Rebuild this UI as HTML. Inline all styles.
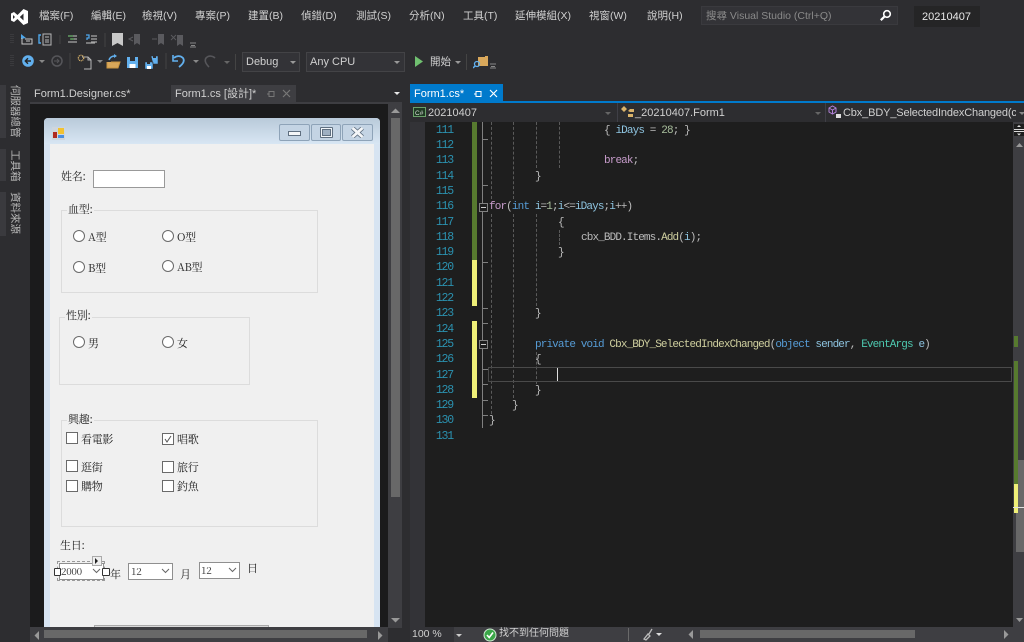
<!DOCTYPE html>
<html><head><meta charset="utf-8">
<style>
html,body{margin:0;padding:0;background:#2d2d30;}
#p{position:relative;width:1024px;height:642px;overflow:hidden;background:#2d2d30;font-family:"Liberation Sans","Noto Sans CJK TC",sans-serif;color:#d0d0d0;font-size:11px;filter:blur(.35px);}
.a,.t,.f,.c,.n{position:absolute;white-space:nowrap;}
.t{line-height:14px;}
.m{font-size:10.5px;color:#d0d0d0;top:9px;}
.f{font-family:"Noto Serif CJK SC","Liberation Serif",serif;font-size:11px;letter-spacing:-.3px;line-height:14px;color:#222;}
.c{font-family:"Liberation Mono","Noto Serif CJK SC",monospace;font-size:11px;letter-spacing:-.88px;line-height:14px;color:#bcbcbc;}
.n{font-family:"Liberation Mono",monospace;font-size:11.5px;letter-spacing:-1.18px;line-height:14px;color:#2b91af;width:28px;left:425px;text-align:right;}
.k{color:#569cd6}.p{color:#c79ccb}.y{color:#cfcf9f}.v{color:#8ec4e0}.g{color:#4ec9b0}.h{color:#a9bf9d}
.r{position:absolute;width:10px;height:10px;border:1px solid #6a6a6a;border-radius:50%;background:#fff;}
.b{position:absolute;width:10px;height:10px;border:1px solid #6a6a6a;background:#fff;}
.gb{position:absolute;border:1px solid #dcdcdc;}
.lb{background:#f0f0f0;}
.cb{position:absolute;border:1px solid #8f8f8f;background:#fff;box-sizing:border-box;}
.gd{position:absolute;width:0;border-left:1px dashed #5a5a5a;}
.vt{position:absolute;writing-mode:vertical-rl;text-orientation:sideways;font-size:10.5px;color:#b8b8b8;line-height:12px;left:9px;}
.dd{position:absolute;width:0;height:0;border-left:3px solid transparent;border-right:3px solid transparent;border-top:3px solid #999;}
</style></head><body><div id="p">

<!-- title/menu -->
<svg class="a" style="left:10px;top:8px" width="19" height="18" viewBox="0 0 19 18"><path d="M13.500 1 18 3v12l-4.500 2-6-6-3.500 3-3-1.500V5.500L4 4l3.500 3zM13.500 5.500 9.800 9l3.700 3.500zM3 7v4l2-2z" fill="#fff" fill-rule="evenodd"/></svg>
<div class="t m" style="left:39px">檔案(F)</div>
<div class="t m" style="left:91px">編輯(E)</div>
<div class="t m" style="left:142px">檢視(V)</div>
<div class="t m" style="left:195px">專案(P)</div>
<div class="t m" style="left:248px">建置(B)</div>
<div class="t m" style="left:301px">偵錯(D)</div>
<div class="t m" style="left:356px">測試(S)</div>
<div class="t m" style="left:409px">分析(N)</div>
<div class="t m" style="left:463px">工具(T)</div>
<div class="t m" style="left:515px">延伸模組(X)</div>
<div class="t m" style="left:589px">視窗(W)</div>
<div class="t m" style="left:647px">說明(H)</div>
<div class="a" style="left:701px;top:6px;width:197px;height:19px;background:#333337;border:1px solid #3a3a3e;box-sizing:border-box"></div>
<div class="t" style="left:706px;top:9px;font-size:10.5px;color:#8a8a8a">搜尋 Visual Studio (Ctrl+Q)</div>
<svg class="a" style="left:879px;top:9px" width="13" height="13" viewBox="0 0 13 13"><circle cx="8" cy="5" r="3.300" fill="none" stroke="#fff" stroke-width="1.600"/><path d="M5.500 7.500 1.800 11.200" stroke="#fff" stroke-width="2.200"/></svg>
<div class="a" style="left:914px;top:6px;width:66px;height:21px;background:#252526"></div>
<div class="t" style="left:922px;top:10px;font-size:11px;color:#e8e8e8">20210407</div>

<!-- toolbars -->
<svg class="a" style="left:0;top:29px" width="230" height="44" viewBox="0 0 230 44" fill="none">
<path d="M11 5v10M13 5v10M11 26v12M13 26v12" stroke="#46464a" stroke-dasharray="1 1"/>
<path d="M21 5l5 4-5 1z" fill="#4ea6ea"/><path d="M22 9v6h10v-5h-7" stroke="#c8c8c8"/><path d="M26 12h4" stroke="#c8c8c8"/>
<path d="M41 6h-2v8h2" stroke="#4ea6ea" stroke-width="1.400"/><path d="M43 5h8v11h-8zM45 8h4M45 11h4M45 13h4" stroke="#b8b8b8"/>
<path d="M60 6v9" stroke="#444"/>
<path d="M68 7h9M71 10h6M68 13h9" stroke="#a8a8a8" stroke-width="1.300"/><path d="M68 7h5M70 10h4" stroke="#5ba35b" stroke-width="1.300"/>
<path d="M86 6h3v3h-2v2" stroke="#4ea6ea" stroke-width="1.300"/><path d="M91 7h6M91 10h6M91 13h6M86 14h9" stroke="#a8a8a8" stroke-width="1.300"/>
<path d="M105 4v14" stroke="#444"/>
<path d="M112 4h11v13l-5.500-3-5.500 3z" fill="#c8c8c8"/>
<path d="M134 5h6v11l-3-2-3 2z" fill="#5a5a5e"/><path d="M133 8l-4 2 4 2" stroke="#5a5a5e"/>
<path d="M158 5h6v11l-3-2-3 2z" fill="#5a5a5e"/><path d="M152 10h5" stroke="#5a5a5e"/>
<path d="M177 6h6v11l-3-2-3 2z" fill="#5a5a5e"/><path d="M171 6l5 5M176 6l-5 5" stroke="#5a5a5e"/>
<path d="M190 14h6M190 18h6M191 16.500h4" stroke="#888"/>
<circle cx="28" cy="32" r="5.800" fill="#62b0ee"/><path d="M31 32h-5.500M28 29.300 25.300 32l2.700 2.700" stroke="#252526" stroke-width="1.400"/>
<path d="M39 31h6l-3 3z" fill="#888"/>
<circle cx="57" cy="32" r="5" stroke="#56565a" stroke-width="1.500"/><path d="M54 32h5M57 30l2 2-2 2" stroke="#56565a"/>
<path d="M70 24v16" stroke="#444"/>
<path d="M82 28h6l3 3v9h-7" stroke="#b8b8b8"/><circle cx="81" cy="29" r="2.700" stroke="#d9b36a" stroke-width="1.300" stroke-dasharray="1 .7"/><path d="M88 28v3h3" stroke="#b8b8b8"/>
<path d="M97 31h6l-3 3z" fill="#888"/>
<path d="M107 33v6h11l2-6h-9" fill="#d9a85b" stroke="#c9953f" stroke-width="1"/><path d="M109 31c1-3 3-4 6-4" stroke="#62b0ee" stroke-width="1.400"/><path d="M114 25l3 2-3 2z" fill="#62b0ee"/>
<path d="M127 28h11v11h-11z" fill="#62b0ee"/><path d="M130 28h5v4h-5z" fill="#2d2d30"/><path d="M129.500 35h6v4h-6z" fill="#fff"/>
<path d="M145 33h8v7h-8zM151 27h7v8h-5z" fill="#62b0ee" stroke="#2d2d30" stroke-width=".5"/><path d="M147 33h3v2h-3zM153 27h3v2h-3z" fill="#2d2d30"/><path d="M147 37h4v3h-4z" fill="#fff"/>
<path d="M166 24v16" stroke="#444"/>
<path d="M174 29c2-2 6-3 9 0 2 3 0 6-4 9" stroke="#62b0ee" stroke-width="1.800"/><path d="M173 26v6h5" stroke="#62b0ee" stroke-width="1.600"/>
<path d="M193 31h6l-3 3z" fill="#888"/>
<path d="M215 29c-2-2-6-3-9 0-2 3 0 6 3 9" stroke="#56565a" stroke-width="1.600"/>
</svg>
<div class="dd" style="left:224px;top:61px;border-top-color:#666"></div>
<div class="a" style="left:235px;top:54px;width:1px;height:16px;background:#444"></div>
<div class="a" style="left:242px;top:52px;width:58px;height:20px;border:1px solid #434346;background:#333337;box-sizing:border-box"></div>
<div class="t" style="left:246px;top:55px;font-size:11px;color:#d0d0d0">Debug</div>
<div class="dd" style="left:290px;top:61px"></div>
<div class="a" style="left:306px;top:52px;width:99px;height:20px;border:1px solid #434346;background:#333337;box-sizing:border-box"></div>
<div class="t" style="left:310px;top:55px;font-size:11px;color:#d0d0d0">Any CPU</div>
<div class="dd" style="left:394px;top:61px"></div>
<svg class="a" style="left:414px;top:55px" width="10" height="13"><path d="M1 1l8 5.500-8 5.500z" fill="#70c070"/></svg>
<div class="t" style="left:430px;top:55px;font-size:10.5px;color:#d0d0d0">開始</div>
<div class="dd" style="left:455px;top:61px"></div>
<div class="a" style="left:466px;top:54px;width:1px;height:16px;background:#444"></div>
<svg class="a" style="left:473px;top:54px" width="24" height="18" fill="none"><path d="M5 3h7v-1h3v10h-10z" fill="#d9a85b"/><circle cx="4" cy="10" r="2.500" stroke="#62b0ee" stroke-width="1.300"/><path d="M2 12 0 14" stroke="#62b0ee" stroke-width="1.500"/><path d="M17 10h6M17 14h6M18 12.500h4" stroke="#888"/></svg>

<!-- left vertical tabs -->
<div class="a" style="left:0;top:85px;width:6px;height:53px;background:#3a3a3e"></div>
<div class="a" style="left:0;top:149px;width:6px;height:32px;background:#3a3a3e"></div>
<div class="a" style="left:0;top:192px;width:6px;height:44px;background:#3a3a3e"></div>
<div class="vt" style="top:85px">伺服器總管</div>
<div class="vt" style="top:150px">工具箱</div>
<div class="vt" style="top:192px">資料來源</div>

<!-- left doc tabs -->
<div class="t" style="left:34px;top:87px;font-size:11px;color:#d0d0d0">Form1.Designer.cs*</div>
<div class="a" style="left:171px;top:85px;width:125px;height:17px;background:#3e3e42"></div>
<div class="t" style="left:175px;top:87px;font-size:11px;color:#d0d0d0">Form1.cs [設計]*</div>
<svg class="a" style="left:266px;top:88px" width="26" height="12" fill="none"><path d="M1 6h2M3 3.500h5v5h-5zM3 3v6" stroke="#777"/><path d="M17 2l7 7M24 2l-7 7" stroke="#777" stroke-width="1.200"/></svg>
<div class="dd" style="left:394px;top:92px;border-top-color:#e8e8e8"></div>
<div class="a" style="left:30px;top:102px;width:372px;height:2px;background:#3e3e42"></div>

<!-- designer -->
<div class="a" style="left:30px;top:104px;width:358px;height:524px;background:#1b1b1c;overflow:hidden">
 <div class="a" style="left:14px;top:14px;width:336px;height:530px;background:#d7e4f2;border-radius:4px 4px 0 0">
  <div class="a" style="left:0;top:0;width:336px;height:26px;border-radius:4px 4px 0 0;background:linear-gradient(#b9cada,#d8e6f3)"></div>
  <div class="a" style="left:6px;top:26px;width:324px;height:504px;background:#f0f0f0"></div>
 </div>
</div>
<svg class="a" style="left:52px;top:127px" width="13" height="13"><rect width="13" height="13" fill="#cfd6dd"/><rect x="1" y="5" width="4" height="6" fill="#b02a20"/><rect x="6" y="1" width="6" height="6" fill="#f2c230"/><rect x="6" y="8" width="6" height="3" fill="#4a8fe0"/></svg>
<div class="a" style="left:279px;top:124px;width:31px;height:17px;border:1px solid #8ea3b8;border-radius:2px;box-sizing:border-box;background:#c4d4e4"></div>
<div class="a" style="left:311px;top:124px;width:30px;height:17px;border:1px solid #8ea3b8;border-radius:2px;box-sizing:border-box;background:#c4d4e4"></div>
<div class="a" style="left:342px;top:124px;width:31px;height:17px;border:1px solid #8ea3b8;border-radius:2px;box-sizing:border-box;background:#c4d4e4"></div>
<div class="a" style="left:288px;top:131px;width:13px;height:5px;background:#f4f6f8;border:1px solid #5f6f80;box-sizing:border-box"></div>
<div class="a" style="left:320px;top:127px;width:13px;height:11px;background:#f0f4f8;border:1px solid #5f6f80;border-radius:1px;box-sizing:border-box"></div>
<div class="a" style="left:322px;top:129px;width:9px;height:7px;background:#9fb0c2;border:1px solid #5f6f80;box-sizing:border-box"></div>
<svg class="a" style="left:351px;top:127px" width="13" height="11"><path d="M1.500 1l10 9M11.500 1l-10 9" stroke="#5f6f80" stroke-width="4.400"/><path d="M1.500 1l10 9M11.500 1l-10 9" stroke="#f4f6f8" stroke-width="2.800"/></svg>

<!-- form contents -->
<div class="f" style="left:61px;top:169px">姓名:</div>
<div class="a" style="left:93px;top:170px;width:72px;height:18px;background:#fff;border:1px solid #999;box-sizing:border-box"></div>

<div class="gb" style="left:61px;top:210px;width:255px;height:81px"></div>
<div class="f lb" style="left:67px;top:202px;padding:0 1px">血型:</div>
<div class="r" style="left:73px;top:230px"></div><div class="f" style="left:88px;top:230px">A型</div>
<div class="r" style="left:162px;top:230px"></div><div class="f" style="left:177px;top:230px">O型</div>
<div class="r" style="left:73px;top:261px"></div><div class="f" style="left:88px;top:261px">B型</div>
<div class="r" style="left:162px;top:260px"></div><div class="f" style="left:177px;top:260px">AB型</div>

<div class="gb" style="left:59px;top:317px;width:189px;height:66px"></div>
<div class="f lb" style="left:65px;top:308px;padding:0 1px">性別:</div>
<div class="r" style="left:73px;top:336px"></div><div class="f" style="left:88px;top:336px">男</div>
<div class="r" style="left:162px;top:336px"></div><div class="f" style="left:177px;top:336px">女</div>

<div class="gb" style="left:61px;top:420px;width:255px;height:105px"></div>
<div class="f lb" style="left:67px;top:412px;padding:0 1px">興趣:</div>
<div class="b" style="left:66px;top:432px"></div><div class="f" style="left:81px;top:432px">看電影</div>
<div class="b" style="left:162px;top:433px"></div><div class="f" style="left:177px;top:432px">唱歌</div>
<svg class="a" style="left:163px;top:434px" width="10" height="10"><path d="M2 5l2 3 4-6" fill="none" stroke="#555" stroke-width="1"/></svg>
<div class="b" style="left:66px;top:460px"></div><div class="f" style="left:81px;top:460px">逛街</div>
<div class="b" style="left:162px;top:461px"></div><div class="f" style="left:177px;top:460px">旅行</div>
<div class="b" style="left:66px;top:480px"></div><div class="f" style="left:81px;top:479px">購物</div>
<div class="b" style="left:162px;top:480px"></div><div class="f" style="left:177px;top:479px">釣魚</div>

<div class="f" style="left:60px;top:538px">生日:</div>
<div class="a" style="left:57px;top:561px;width:48px;height:20px;border:1px dashed #999;box-sizing:border-box"></div>
<div class="cb" style="left:59px;top:563px;width:45px;height:17px;background:#fff"></div>
<div class="f" style="left:61px;top:564px;font-size:10px;color:#333">2000</div>
<svg class="a" style="left:92px;top:568px" width="9" height="6"><path d="M1 1l3.500 3.500L8 1" fill="none" stroke="#666"/></svg>
<div class="a" style="left:54px;top:568px;width:5px;height:6px;background:#fff;border:1px solid #333;border-radius:1px"></div>
<div class="a" style="left:102px;top:568px;width:6px;height:6px;background:#fff;border:1px solid #333;border-radius:1px"></div>
<div class="a" style="left:92px;top:556px;width:8px;height:8px;background:#eee;border:1px solid #aaa"></div>
<svg class="a" style="left:94px;top:558px" width="6" height="6"><path d="M1 0l3 3-3 3z" fill="#222"/></svg>
<div class="f" style="left:110px;top:567px">年</div>
<div class="cb" style="left:128px;top:563px;width:45px;height:17px"></div>
<div class="f" style="left:131px;top:564px;font-size:10px;color:#333">12</div>
<svg class="a" style="left:161px;top:568px" width="9" height="6"><path d="M1 1l3.500 3.500L8 1" fill="none" stroke="#666"/></svg>
<div class="f" style="left:180px;top:567px">月</div>
<div class="cb" style="left:199px;top:562px;width:41px;height:17px"></div>
<div class="f" style="left:201px;top:563px;font-size:10px;color:#333">12</div>
<svg class="a" style="left:228px;top:567px" width="9" height="6"><path d="M1 1l3.500 3.500L8 1" fill="none" stroke="#666"/></svg>
<div class="f" style="left:247px;top:561px">日</div>
<div class="a" style="left:94px;top:625px;width:175px;height:3px;background:#d8d8d8;border:1px solid #aaa;border-bottom:0;box-sizing:border-box"></div>

<!-- left scrollbars -->
<div class="a" style="left:388px;top:104px;width:14px;height:524px;background:#3e3e42"></div>
<div class="a" style="left:391px;top:118px;width:9px;height:379px;background:#686868"></div>
<svg class="a" style="left:391px;top:108px" width="9" height="6"><path d="M0 5l4.500-4.500L9 5z" fill="#999"/></svg>
<svg class="a" style="left:391px;top:617px" width="9" height="6"><path d="M0 1l4.500 4.500L9 1z" fill="#999"/></svg>
<div class="a" style="left:30px;top:627px;width:358px;height:15px;background:#3e3e42"></div>
<div class="a" style="left:44px;top:630px;width:323px;height:8px;background:#686868"></div>
<svg class="a" style="left:34px;top:631px" width="6" height="9"><path d="M5 0L.5 4.500 5 9z" fill="#999"/></svg>
<svg class="a" style="left:377px;top:631px" width="6" height="9"><path d="M1 0l4.500 4.500L1 9z" fill="#999"/></svg>
<div class="a" style="left:388px;top:628px;width:14px;height:14px;background:#2d2d30"></div>

<!-- right tab -->
<div class="a" style="left:410px;top:84px;width:93px;height:17px;background:#007acc"></div>
<div class="t" style="left:414px;top:87px;font-size:11px;color:#fff">Form1.cs*</div>
<svg class="a" style="left:473px;top:88px" width="26" height="12" fill="none"><path d="M1 6h2M3 3.500h5v5h-5zM3 3v6" stroke="#fff"/><path d="M17 2l7 7M24 2l-7 7" stroke="#fff" stroke-width="1.200"/></svg>
<div class="a" style="left:410px;top:101px;width:614px;height:2px;background:#007acc"></div>

<!-- nav bar -->
<div class="a" style="left:410px;top:103px;width:614px;height:19px;background:#2d2d30"></div>
<svg class="a" style="left:413px;top:107px" width="13" height="10"><rect x=".5" y=".5" width="12" height="9" fill="#1e3a22" stroke="#6aa06a"/><text x="2" y="8" font-size="6.500" fill="#ddd" font-family="Liberation Sans">C#</text></svg>
<div class="t" style="left:428px;top:106px;font-size:11px;color:#d0d0d0">20210407</div>
<div class="dd" style="left:605px;top:112px;border-top-color:#666"></div>
<div class="a" style="left:617px;top:103px;width:1px;height:19px;background:#3f3f46"></div>
<svg class="a" style="left:620px;top:105px" width="16" height="14"><path d="M1 4l3-3 3 3-3 3zM8 6l2-2 4 0 0 3-4 0zM8 9h5v3h-5z" fill="#d9b36a"/></svg>
<div class="t" style="left:635px;top:106px;font-size:11px;color:#d0d0d0">_20210407.Form1</div>
<div class="dd" style="left:815px;top:112px;border-top-color:#666"></div>
<div class="a" style="left:825px;top:103px;width:1px;height:19px;background:#3f3f46"></div>
<svg class="a" style="left:827px;top:105px" width="16" height="14" fill="none"><path d="M2 3l3.500-2L9 3v4L5.500 9 2 7zM2 3l3.500 2L9 3M5.500 5v4" stroke="#b180d7"/><rect x="9" y="9" width="5" height="4" fill="#ddd"/></svg>
<div class="t" style="left:843px;top:106px;font-size:11px;letter-spacing:-.14px;color:#d0d0d0;width:173px;overflow:hidden">Cbx_BDY_SelectedIndexChanged(c</div>
<div class="dd" style="left:1019px;top:112px;border-top-color:#888"></div>

<!-- editor -->
<div class="a" style="left:410px;top:122px;width:603px;height:505px;background:#1e1e1e"></div>
<div class="a" style="left:410px;top:122px;width:15px;height:505px;background:#333337"></div>
<div class="a" style="left:472px;top:122px;width:4.500px;height:138px;background:#577a2f"></div>
<div class="a" style="left:472px;top:260px;width:4.500px;height:46px;background:#efef78"></div>
<div class="a" style="left:472px;top:321px;width:4.500px;height:77px;background:#efef78"></div>

<!-- outline -->
<div class="a" style="left:482px;top:122px;width:1px;height:306px;background:#808080"></div>
<svg class="a" style="left:478px;top:122px" width="12" height="310" fill="none" stroke="#808080"><path d="M5 17.500h5M5 63.500h5M5 140.500h5M5 186.500h5M5 201.500h5M5 247.500h5M5 262.500h5M5 278.500h5M5 293.500h5"/></svg>
<div class="a" style="left:479px;top:203px;width:7px;height:7px;background:#1e1e1e;border:1px solid #808080"></div><div class="a" style="left:481px;top:207px;width:5px;height:1px;background:#ccc"></div>
<div class="a" style="left:479px;top:340px;width:7px;height:7px;background:#1e1e1e;border:1px solid #808080"></div><div class="a" style="left:481px;top:344px;width:5px;height:1px;background:#ccc"></div>

<div class="gd" style="left:491px;top:122px;height:77px"></div>
<div class="gd" style="left:491px;top:214px;height:200px"></div>
<div class="gd" style="left:513px;top:122px;height:77px"></div>
<div class="gd" style="left:513px;top:214px;height:184px"></div>
<div class="gd" style="left:536px;top:122px;height:46px"></div>
<div class="gd" style="left:536px;top:214px;height:92px"></div>
<div class="gd" style="left:536px;top:352px;height:32px"></div>
<div class="gd" style="left:559px;top:122px;height:46px"></div>
<div class="gd" style="left:559px;top:230px;height:15px"></div>
<div class="a" style="left:488px;top:367px;width:524px;height:15px;border:1px solid #4a4a4a;box-sizing:border-box"></div>
<div class="a" style="left:557px;top:368px;width:1px;height:13px;background:#ddd"></div>

<div class="n" style="top:124px">111</div><div class="n" style="top:139px">112</div><div class="n" style="top:154px">113</div><div class="n" style="top:170px">114</div><div class="n" style="top:185px">115</div><div class="n" style="top:200px">116</div><div class="n" style="top:216px">117</div><div class="n" style="top:231px">118</div><div class="n" style="top:246px">119</div><div class="n" style="top:261px">120</div><div class="n" style="top:277px">121</div><div class="n" style="top:292px">122</div><div class="n" style="top:307px">123</div><div class="n" style="top:323px">124</div><div class="n" style="top:338px">125</div><div class="n" style="top:353px">126</div><div class="n" style="top:369px">127</div><div class="n" style="top:384px">128</div><div class="n" style="top:399px">129</div><div class="n" style="top:414px">130</div><div class="n" style="top:430px">131</div>

<div class="c" style="left:604px;top:124px">{ <span class="v">iDays</span> = <span class="h">28</span>; }</div>
<div class="c" style="left:604px;top:154px"><span class="p">break</span>;</div>
<div class="c" style="left:535px;top:170px">}</div>
<div class="c" style="left:489px;top:200px"><span class="p">for</span>(<span class="k">int</span> <span class="v">i</span>=<span class="h">1</span>;<span class="v">i</span>&lt;=<span class="v">iDays</span>;<span class="v">i</span>++)</div>
<div class="c" style="left:558px;top:216px">{</div>
<div class="c" style="left:581px;top:231px">cbx_BDD.Items.<span class="y">Add</span>(<span class="v">i</span>);</div>
<div class="c" style="left:558px;top:246px">}</div>
<div class="c" style="left:535px;top:307px">}</div>
<div class="c" style="left:535px;top:338px"><span class="k">private</span> <span class="k">void</span> <span class="y">Cbx_BDY_SelectedIndexChanged</span>(<span class="k">object</span> <span class="v">sender</span>, <span class="g">EventArgs</span> <span class="v">e</span>)</div>
<div class="c" style="left:535px;top:353px">{</div>
<div class="c" style="left:535px;top:384px">}</div>
<div class="c" style="left:512px;top:399px">}</div>
<div class="c" style="left:489px;top:414px">}</div>

<!-- right scrollbar -->
<div class="a" style="left:1013px;top:122px;width:11px;height:505px;background:#3e3e42"></div>
<div class="a" style="left:1014px;top:124px;width:10px;height:12px;background:#1e1e1e"></div>
<svg class="a" style="left:1014px;top:124px" width="10" height="12" fill="#ddd"><path d="M0 5h10v1H0zM0 7h10v1H0zM3 3l2-2 2 2zM3 9.500h4L5 11.500z"/></svg>
<svg class="a" style="left:1016px;top:142px" width="8" height="6"><path d="M0 5l3.500-4L7 5z" fill="#999"/></svg>
<div class="a" style="left:1016px;top:460px;width:8px;height:92px;background:#686868"></div>
<div class="a" style="left:1014px;top:336px;width:4px;height:11px;background:#577a2f"></div>
<div class="a" style="left:1014px;top:361px;width:4px;height:123px;background:#577a2f"></div>
<div class="a" style="left:1014px;top:484px;width:4px;height:29px;background:#efef78"></div>
<div class="a" style="left:1013px;top:507px;width:11px;height:1px;background:#e0e0e0"></div>
<svg class="a" style="left:1016px;top:617px" width="8" height="6"><path d="M0 1l3.500 4L7 1z" fill="#999"/></svg>

<!-- status bottom -->
<div class="a" style="left:410px;top:627px;width:614px;height:15px;background:#3e3e42"></div>
<div class="a" style="left:410px;top:627px;width:44px;height:15px;background:#333337"></div>
<div class="t" style="left:412px;top:627px;font-size:10.5px;color:#d0d0d0">100 %</div>
<div class="dd" style="left:456px;top:634px;border-top-color:#ccc"></div>
<svg class="a" style="left:483px;top:628px" width="14" height="14"><circle cx="7" cy="7" r="6" fill="#3aa648" stroke="#cfe8d2"/><path d="M4 7l2.200 2.500L10 4.500" fill="none" stroke="#fff" stroke-width="1.600"/></svg>
<div class="t" style="left:499px;top:627px;font-size:10px;color:#d0d0d0">找不到任何問題</div>
<div class="a" style="left:628px;top:628px;width:1px;height:13px;background:#6a6a6a"></div>
<svg class="a" style="left:641px;top:628px" width="26" height="13"><path d="M3 11l4-5 2 2-4 4zM8 6l3-5" fill="none" stroke="#bbb" stroke-width="1.300"/><path d="M15 5h6l-3 3z" fill="#ddd"/></svg>
<svg class="a" style="left:688px;top:630px" width="6" height="9"><path d="M5 0L.5 4.500 5 9z" fill="#999"/></svg>
<div class="a" style="left:700px;top:630px;width:215px;height:8px;background:#686868"></div>
<svg class="a" style="left:1003px;top:630px" width="6" height="9"><path d="M1 0l4.500 4.500L1 9z" fill="#999"/></svg>
</div></body></html>
